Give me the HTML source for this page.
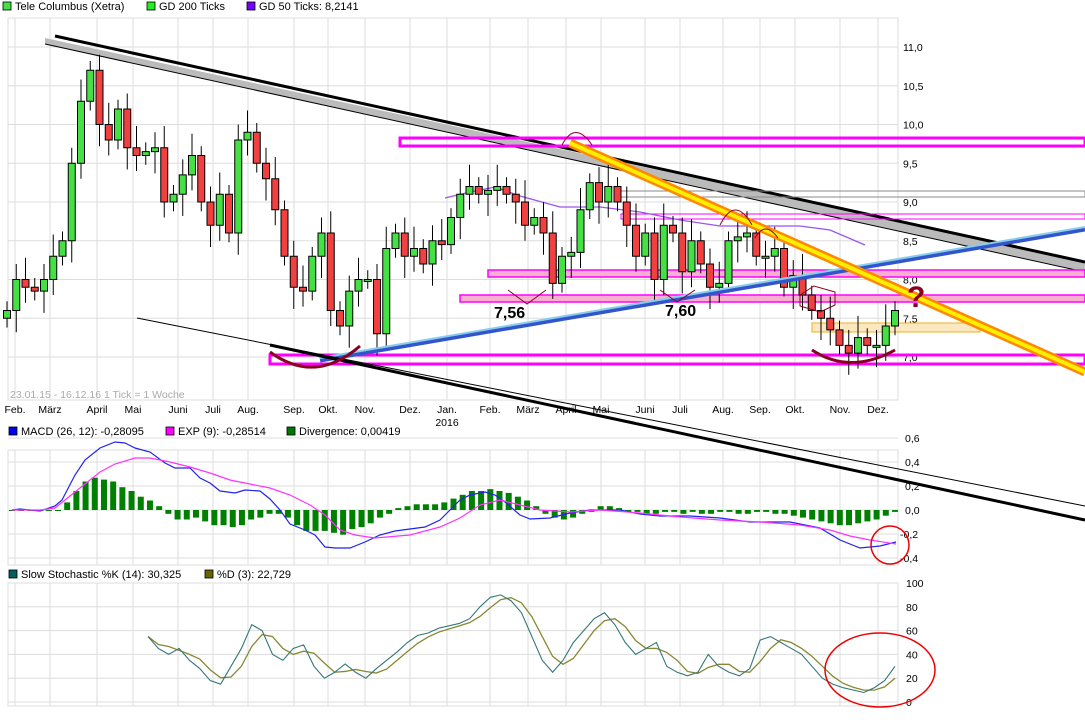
<!DOCTYPE html>
<html><head><meta charset="utf-8"><style>
body{margin:0;background:#fff;width:1085px;height:720px;overflow:hidden;font-family:"Liberation Sans",sans-serif}
svg{display:block}
text{font-family:"Liberation Sans",sans-serif}
</style></head><body>
<svg id="s" width="1085" height="720" xmlns="http://www.w3.org/2000/svg">
<rect width="1085" height="720" fill="#fff"/>
<g font-size="11" fill="#000">
<rect x="3" y="2" width="8" height="8" fill="#44e044" stroke="#000" stroke-width="0.8"/><text x="15" y="10">Tele Columbus (Xetra)</text>
<rect x="147" y="2" width="8" height="8" fill="#22ee22" stroke="#000" stroke-width="0.8"/><text x="159" y="10">GD 200 Ticks</text>
<rect x="247" y="2" width="8" height="8" fill="#7700ff" stroke="#000" stroke-width="0.8"/><text x="259" y="10">GD 50 Ticks: 8,2141</text>
<rect x="9" y="427" width="8" height="8" fill="#0000ee" stroke="#000" stroke-width="0.8"/><text x="21" y="435">MACD (26, 12): -0,28095</text>
<rect x="166" y="427" width="8" height="8" fill="#ff00ff" stroke="#000" stroke-width="0.8"/><text x="178" y="435">EXP (9): -0,28514</text>
<rect x="287" y="427" width="8" height="8" fill="#007700" stroke="#000" stroke-width="0.8"/><text x="299" y="435">Divergence: 0,00419</text>
<rect x="9" y="570" width="8" height="8" fill="#006060" stroke="#000" stroke-width="0.8"/><text x="21" y="578">Slow Stochastic %K (14): 30,325</text>
<rect x="205" y="570" width="8" height="8" fill="#666600" stroke="#000" stroke-width="0.8"/><text x="217" y="578">%D (3): 22,729</text>
</g>
<g id="grid"></g>
<g id="ov1"></g>
<g id="candles"></g>
<g id="ov2"></g>
<g id="lower"></g>
</svg>
<script>
var NS="http://www.w3.org/2000/svg";
function el(p,t,a){var e=document.createElementNS(NS,t);for(var k in a)e.setAttribute(k,a[k]);p.appendChild(e);return e;}
function tx(p,x,y,s,a){var e=el(p,"text",Object.assign({x:x,y:y},a||{}));e.textContent=s;return e;}
var G=document.getElementById("grid"),O1=document.getElementById("ov1"),C=document.getElementById("candles"),O2=document.getElementById("ov2"),L=document.getElementById("lower");
var R=898;
[[8,18,400],[8,450,565],[8,583,706]].forEach(function(p){el(G,"rect",{x:p[0],y:p[1],width:R-p[0],height:p[2]-p[1],fill:"none",stroke:"#ddd"});});
var months=[["Feb.",15],["März",50],["April",97],["Mai",133],["Juni",178],["Juli",213],["Aug.",248],["Sep.",294],["Okt.",328],["Nov.",365],["Dez.",410],["Jan.",447],["Feb.",490],["März",528],["April",566],["Mai",601],["Juni",645],["Juli",680],["Aug.",723],["Sep.",760],["Okt.",795],["Nov.",840],["Dez.",878]];
months.forEach(function(m){
 [[18,400],[450,565],[583,706]].forEach(function(r){el(G,"line",{x1:m[1],y1:r[0],x2:m[1],y2:r[1],stroke:"#ddd"});});
 tx(G,m[1],413,m[0],{"font-size":"10.5","text-anchor":"middle"});
});
tx(G,447,426,"2016",{"font-size":"10.5","text-anchor":"middle"});
function py(p){return 357-(p-7)*77.5;}
[[11,"11,0"],[10.5,"10,5"],[10,"10,0"],[9.5,"9,5"],[9,"9,0"],[8.5,"8,5"],[8,"8,0"],[7.5,"7,5"],[7,"7,0"]].forEach(function(v){var y=py(v[0]);el(G,"line",{x1:8,y1:y,x2:R,y2:y,stroke:"#ddd"});tx(G,903,y+4,v[1],{"font-size":"10.5"});});
[[0.6,"0,6"],[0.4,"0,4"],[0.2,"0,2"],[0,"0,0"],[-0.2,"-0,2"],[-0.4,"-0,4"]].forEach(function(v){var y=510-v[0]*120;el(G,"line",{x1:8,y1:y,x2:R,y2:y,stroke:"#ddd"});tx(G,v[0]<0?900:905,y+4,v[1],{"font-size":"10.5"});});
[100,80,60,40,20,0].forEach(function(v){var y=702-v*1.19;el(G,"line",{x1:8,y1:y,x2:R,y2:y,stroke:"#ddd"});tx(G,906,y+4,String(v),{"font-size":"10.5"});});
tx(G,10,398,"23.01.15 - 16.12.16   1 Tick = 1 Woche",{"font-size":"10.5",fill:"#aaa"});
el(O1,"polygon",{points:"45,38 1085,262 1085,272 45,44",fill:"#bbb"});
el(O1,"line",{x1:55,y1:36,x2:1085,y2:262,stroke:"#000","stroke-width":"3"});
el(O1,"line",{x1:45,y1:44,x2:1085,y2:272,stroke:"#000","stroke-width":"1"});
el(O1,"rect",{x:400,y:138,width:685,height:8,fill:"none",stroke:"#f0f","stroke-width":"3"});
el(O1,"rect",{x:488,y:270,width:597,height:7,fill:"#f9b0d0",stroke:"#f0f","stroke-width":"1.5"});
el(O1,"rect",{x:460,y:295,width:625,height:7,fill:"#f9b0d0",stroke:"#f0f","stroke-width":"1.5"});
el(O1,"rect",{x:270,y:355,width:815,height:9,fill:"none",stroke:"#f0f","stroke-width":"3"});
el(O1,"rect",{x:621,y:191,width:464,height:6,fill:"none",stroke:"#888","stroke-width":"1"});
el(O1,"rect",{x:621,y:214,width:464,height:5,fill:"none",stroke:"#f0f","stroke-width":"1"});
el(O1,"rect",{x:812,y:323,width:168,height:9,fill:"#fbe8c0",stroke:"#f0b020","stroke-width":"1"});
el(O1,"polyline",{points:"445,198 470,192 495,187 520,196 560,207 600,207 640,212 680,220 720,226 760,226 800,226 830,230 865,245",fill:"none",stroke:"#9955ee","stroke-width":"1.3"});
var cl=[7.6,8.0,7.9,7.85,8.0,8.3,8.5,9.5,10.3,10.7,10.0,9.8,10.2,9.7,9.6,9.65,9.7,9.0,9.1,9.35,9.6,9.0,8.7,9.1,8.6,9.8,9.9,9.5,9.3,8.9,8.3,7.9,7.85,8.3,8.6,7.6,7.4,7.85,8.0,8.0,7.3,8.4,8.6,8.3,8.4,8.2,8.5,8.45,8.8,9.1,9.2,9.1,9.15,9.2,9.1,9.0,8.7,8.8,8.6,7.95,8.3,8.35,8.9,9.25,9.0,9.2,9.0,8.7,8.3,8.6,8.0,8.7,8.6,8.1,8.5,8.2,7.9,7.95,8.5,8.55,8.6,8.3,8.3,8.4,7.9,8.05,7.8,7.6,7.5,7.35,7.15,7.05,7.25,7.15,7.15,7.4,7.6];
var n=cl.length,dx=(895-7)/(n-1);
for(var i=0;i<n;i++){var x=7+i*dx,c=cl[i],o=i?cl[i-1]:7.5;var hi=Math.max(o,c)+0.12+0.08*((i*7)%3),lo=Math.min(o,c)-0.12-0.08*((i*5)%3);
 el(C,"line",{x1:x,y1:py(hi),x2:x,y2:py(lo),stroke:"#000","stroke-width":"1"});
 var t=py(Math.max(o,c)),b=py(Math.min(o,c));if(b-t<2){b=t+2;}
 el(C,"rect",{x:x-3.5,y:t,width:7,height:b-t,fill:c>=o?"#44e044":"#f04040",stroke:"#000","stroke-width":"1"});}
el(O2,"line",{x1:320,y1:360,x2:1085,y2:229,stroke:"#3355cc","stroke-width":"5"});
el(O2,"line",{x1:320,y1:358,x2:1085,y2:227,stroke:"#88ccee","stroke-width":"2"});
el(O2,"line",{x1:570,y1:143,x2:1085,y2:372,stroke:"#ff8800","stroke-width":"9"});
el(O2,"line",{x1:570,y1:143,x2:1085,y2:372,stroke:"#ffee00","stroke-width":"4"});
el(O2,"line",{x1:137,y1:318,x2:1085,y2:506,stroke:"#000","stroke-width":"1"});
el(O2,"line",{x1:270,y1:345,x2:1085,y2:520,stroke:"#000","stroke-width":"3"});
el(O2,"path",{d:"M270,352 Q315,385 360,346",fill:"none",stroke:"#880022","stroke-width":"3"});
el(O2,"path",{d:"M812,350 Q850,375 895,350",fill:"none",stroke:"#880022","stroke-width":"3"});
el(O2,"path",{d:"M508,290 L527,304 L546,290 M660,290 L677,302 L695,290",fill:"none",stroke:"#880022","stroke-width":"1"});
el(O2,"path",{d:"M562,145 Q575,120 592,145 M720,225 Q735,195 752,225 M755,238 Q765,220 778,238",fill:"none",stroke:"#880022","stroke-width":"1"});
el(O2,"polygon",{points:"800,295 814,286 835,292 835,305 820,312 800,306",fill:"none",stroke:"#880022","stroke-width":"1"});
tx(O2,494,318,"7,56",{"font-size":"16","font-weight":"bold"});
tx(O2,665,316,"7,60",{"font-size":"16","font-weight":"bold"});
tx(O2,907,307,"?",{"font-size":"30","font-weight":"bold",fill:"#880022"});
var hist=[0,0,0,0,0,0,0.04,0.1,0.15,0.17,0.16,0.15,0.12,0.1,0.07,0.05,0.02,-0.02,-0.05,-0.05,-0.04,-0.06,-0.08,-0.08,-0.09,-0.08,-0.05,-0.04,-0.02,-0.02,-0.04,-0.08,-0.11,-0.11,-0.11,-0.12,-0.13,-0.1,-0.09,-0.07,-0.04,-0.02,0.01,0.02,0.03,0.03,0.03,0.04,0.06,0.08,0.1,0.1,0.11,0.1,0.09,0.07,0.05,0.02,-0.02,-0.04,-0.05,-0.04,-0.02,-0.01,0.02,0.02,0.01,-0.01,-0.01,-0.02,-0.02,-0.01,-0.01,-0.02,-0.01,-0.02,-0.02,-0.01,-0.01,-0.02,-0.02,-0.01,-0.01,-0.02,-0.02,-0.03,-0.04,-0.05,-0.06,-0.07,-0.08,-0.08,-0.07,-0.06,-0.05,-0.03,-0.01];
var hx=(895-12)/(hist.length-1);
hist.forEach(function(v,i){var x=12+i*hx,h=v*190,y=510-h;el(L,"rect",{x:x-3,y:Math.min(y,510),width:6,height:Math.max(1,Math.abs(h)),fill:"#008000"});});
el(L,"polyline",{points:"12,510 20,509 40,511 55,506 62,500 75,475 85,460 100,448 115,442 125,443 135,448 150,452 165,463 175,468 190,468 200,478 210,483 220,491 235,493 245,490 260,491 270,499 280,510 290,524 305,530 315,535 325,547 335,548 350,548 365,542 380,535 395,531 425,527 440,520 450,510 460,500 470,495 485,492 495,495 505,502 520,515 530,519 550,518 570,513 590,510 620,510 640,514 660,516 690,516 720,518 750,522 790,522 820,528 840,540 860,548 880,546 896,542",fill:"none",stroke:"#2222ee","stroke-width":"1.2"});
el(L,"polyline",{points:"12,510 40,510 55,508 70,496 85,484 100,472 115,464 135,458 150,458 170,462 190,467 210,473 230,480 250,484 270,488 290,495 310,505 325,515 340,530 355,535 375,538 410,535 440,527 460,518 480,505 500,500 520,505 540,510 570,512 600,510 640,513 680,517 720,520 760,522 800,525 830,530 850,536 870,540 896,544",fill:"none",stroke:"#ff33ff","stroke-width":"1.2"});
el(L,"ellipse",{cx:890,cy:545,rx:19,ry:19,fill:"none",stroke:"#ee0000","stroke-width":"1.5"});
function sy(v){return 702-v*1.19;}
var K=[55,45,40,45,35,28,18,15,30,45,65,60,40,35,45,48,30,20,25,32,25,20,28,35,42,50,56,58,62,64,66,70,80,88,90,85,75,55,35,25,35,50,60,70,75,65,50,40,45,50,30,25,22,25,40,30,25,22,28,52,55,50,45,40,30,20,15,12,10,8,12,18,30];
var kx=(895-148)/(K.length-1),kp="",dp="";
K.forEach(function(v,i){var x=148+i*kx;kp+=x+","+sy(v)+" ";var d=(v+(K[i-1]||v)+(K[i-2]||v))/3;dp+=(x)+","+sy(d)+" ";});
el(L,"polyline",{points:dp,fill:"none",stroke:"#888833","stroke-width":"1.3"});
el(L,"polyline",{points:kp,fill:"none",stroke:"#337777","stroke-width":"1.1"});
el(L,"ellipse",{cx:880,cy:670,rx:55,ry:37,fill:"none",stroke:"#ee0000","stroke-width":"1.5"});
</script>
</body></html>
